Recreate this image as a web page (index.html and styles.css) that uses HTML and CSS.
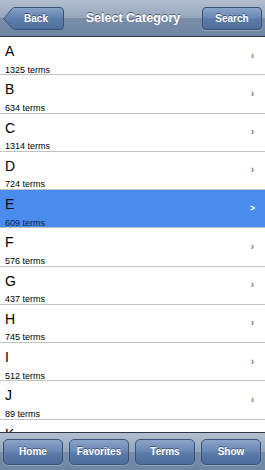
FILE: index.html
```html
<!DOCTYPE html>
<html>
<head>
<meta charset="utf-8">
<link rel="stylesheet" href="styles.css">
</head>
<body>
<div class="screen">
  <header class="navbar">
    <button class="back">
      <svg class="back-shape" width="61" height="23" viewBox="0 0 61 23">
        <defs>
          <linearGradient id="bg1" x1="0" y1="0" x2="0" y2="1">
            <stop offset="0" stop-color="#8aa4c8"/>
            <stop offset="0.5" stop-color="#5f7fad"/>
            <stop offset="1" stop-color="#4d6d9b"/>
          </linearGradient>
        </defs>
        <path d="M0.8 11.5 L9.5 1.3 Q10.2 0.5 11.5 0.5 H57 Q60.5 0.5 60.5 4 V19 Q60.5 22.5 57 22.5 H11.5 Q10.2 22.5 9.5 21.7 Z" fill="url(#bg1)" stroke="#3b5278" stroke-width="1"/>
      </svg>
      <span class="back-label">Back</span>
    </button>
    <h1 class="title">Select Category</h1>
    <button class="btn nav-btn">Search</button>
  </header>

  <ul class="list">
    <li class="row"><div class="txt"><div class="letter">A</div><div class="count">1325 terms</div></div><span class="chev">›</span></li>
    <li class="row"><div class="txt"><div class="letter">B</div><div class="count">634 terms</div></div><span class="chev">›</span></li>
    <li class="row"><div class="txt"><div class="letter">C</div><div class="count">1314 terms</div></div><span class="chev">›</span></li>
    <li class="row"><div class="txt"><div class="letter">D</div><div class="count">724 terms</div></div><span class="chev">›</span></li>
    <li class="row selected"><div class="txt"><div class="letter">E</div><div class="count">609 terms</div></div><span class="chev">&gt;</span></li>
    <li class="row"><div class="txt"><div class="letter">F</div><div class="count">576 terms</div></div><span class="chev">›</span></li>
    <li class="row"><div class="txt"><div class="letter">G</div><div class="count">437 terms</div></div><span class="chev">›</span></li>
    <li class="row"><div class="txt"><div class="letter">H</div><div class="count">745 terms</div></div><span class="chev">›</span></li>
    <li class="row"><div class="txt"><div class="letter">I</div><div class="count">512 terms</div></div><span class="chev">›</span></li>
    <li class="row"><div class="txt"><div class="letter">J</div><div class="count">89 terms</div></div><span class="chev">›</span></li>
    <li class="row partial"><div class="txt"><div class="letter">K</div></div></li>
  </ul>

  <footer class="toolbar">
    <button class="btn tool-btn">Home</button>
    <button class="btn tool-btn">Favorites</button>
    <button class="btn tool-btn">Terms</button>
    <button class="btn tool-btn">Show</button>
  </footer>
</div>
</body>
</html>
```

FILE: styles.css
```css
* { box-sizing: border-box; }
html, body { margin: 0; padding: 0; }
body {
  font-family: "Liberation Sans", Arial, sans-serif;
  background: #fff;
}
.screen {
  width: 265px;
  height: 470px;
  display: flex;
  flex-direction: column;
  overflow: hidden;
}
.navbar {
  height: 37px;
  flex: none;
  display: flex;
  align-items: center;
  justify-content: space-between;
  padding: 0 3px 0 3px;
  background: linear-gradient(#b3bfcf 0%, #95a5bb 50%, #7a8eaa 51%, #6e84a2 100%);
  border-bottom: 1px solid #2d3642;
}
.title {
  margin: 0;
  font-size: 12.5px;
  font-weight: bold;
  color: #fff;
  text-shadow: 0 -1px 0 rgba(40, 55, 80, 0.7);
}
button {
  font-family: "Liberation Sans", Arial, sans-serif;
  padding: 0;
  margin: 0;
  cursor: default;
}
.back {
  position: relative;
  width: 61px;
  height: 23px;
  border: 0;
  background: none;
  display: flex;
  align-items: center;
  justify-content: center;
}
.back-shape {
  position: absolute;
  left: 0;
  top: 0;
}
.back-label {
  position: relative;
  padding-left: 5px;
  font-size: 10px;
  font-weight: bold;
  color: #fff;
  text-shadow: 0 -1px 0 rgba(30, 45, 75, 0.6);
}
.btn {
  height: 23px;
  width: 60px;
  border: 1px solid #3b5278;
  border-radius: 4px;
  background: linear-gradient(#8aa4c8 0%, #6a89b5 45%, #5a7aa8 55%, #4d6d9b 100%);
  color: #fff;
  font-size: 10px;
  font-weight: bold;
  text-shadow: 0 -1px 0 rgba(30, 45, 75, 0.6);
  box-shadow: 0 1px 0 rgba(255, 255, 255, 0.25);
}
.list {
  list-style: none;
  margin: 0;
  padding: 0;
  flex: 1;
  overflow: hidden;
}
.row {
  height: 38.25px;
  display: flex;
  align-items: flex-start;
  padding: 7px 0 0 5px;
  border-bottom: 1px solid #c2c2c2;
  background: #fff;
  overflow: hidden;
}
.txt {
  flex: 1;
  display: flex;
  flex-direction: column;
}
.letter {
  font-size: 14px;
  line-height: 14px;
  color: #000;
}
.count {
  margin-top: 7.5px;
  font-size: 9px;
  line-height: 9px;
  color: #000;
}
.chev {
  align-self: center;
  margin: -8px 11px 0 0;
  font-size: 10px;
  color: #7a7a7a;
  font-weight: bold;
}
.row.selected {
  background: #4a8bee;
}
.row.selected .count { color: #0c1f4a; }
.row.selected .letter { color: #0a0f1c; }
.row.selected .chev {
  color: #fff;
  font-size: 9px;
  margin-right: 10px;
}
.toolbar {
  height: 38px;
  flex: none;
  display: flex;
  align-items: center;
  gap: 6px;
  padding: 0 3px;
  border-top: 1px solid #2d3642;
  background: linear-gradient(#b3bfcf 0%, #95a5bb 50%, #7a8eaa 51%, #6e84a2 100%);
}
.tool-btn {
  height: 26px;
  width: 60px;
  border-radius: 5px;
}
```
